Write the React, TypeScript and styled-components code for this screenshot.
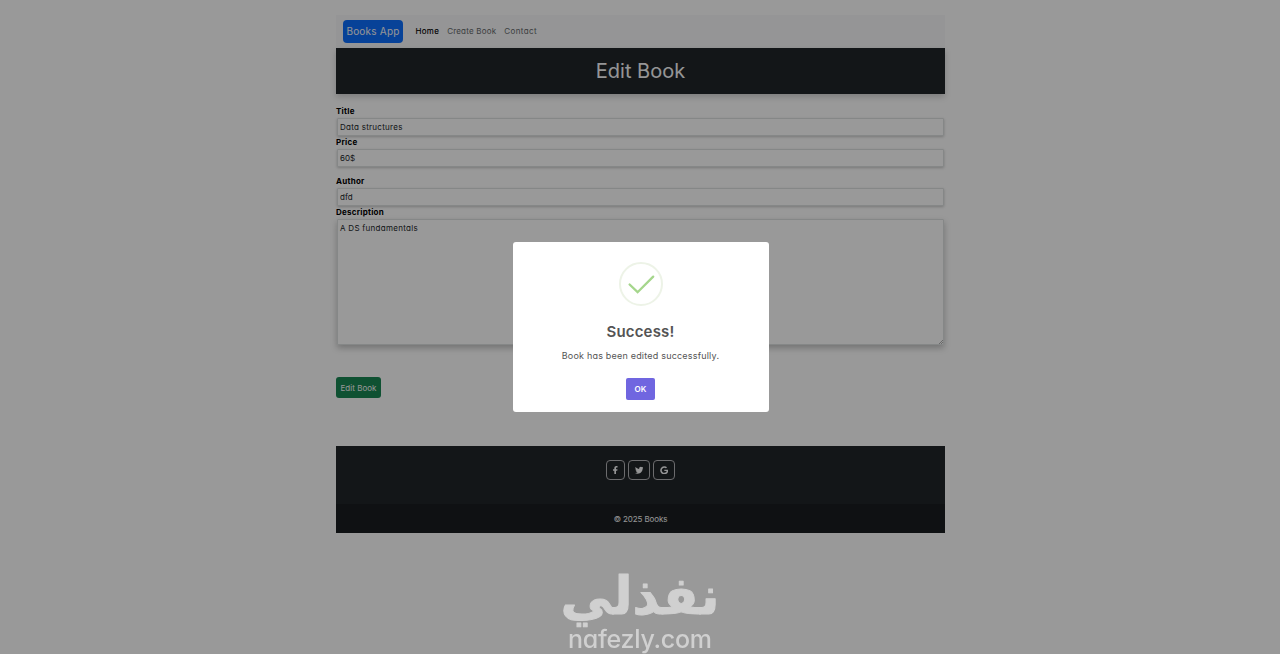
import React from 'react';
import styled, { createGlobalStyle, ThemeProvider } from 'styled-components';
import { FaFacebookF, FaGoogle, FaTwitter } from 'react-icons/fa';

const theme = {
  colors: {
    primary: '#0d6efd',
    success: '#198754',
    dark: '#212529',
    light: '#f8f9fa',
    confirm: '#7066e0',
    watermark: '#d0d0d0',
  },
};

const GlobalStyle = createGlobalStyle`
  * {
    box-sizing: border-box;
  }

  body {
    margin: 0;
    overflow: hidden;
    background: #fff;
    color: #212529;
    font-family: Inter, 'Liberation Sans', sans-serif;
    font-feature-settings: 'cv11';
    font-size: 8px;
    line-height: 12px;
  }
`;

const Text = styled.span<{ $spacing?: number }>`
  letter-spacing: ${({ $spacing = 0 }) => $spacing}px;
  white-space: nowrap;
`;

const Page = styled.div`
  width: 609px;
  margin: 0 auto;
  padding-top: 15px;
  position: relative;
  left: 0.5px;
`;

const NavigationBase = styled.nav`
  display: flex;
  align-items: center;
  height: 33px;
  padding-left: 7px;
  background: ${({ theme }) => theme.colors.light};
`;

const Brand = styled.a`
  width: 60px;
  height: 23px;
  margin-right: 12.5px;
  border-radius: 4px;
  background: ${({ theme }) => theme.colors.primary};
  color: #f8f9fa;
  font-size: 10px;
  line-height: 23px;
  text-align: center;
`;

const MenuItem = styled.a<{ $active?: boolean }>`
  margin-right: 8px;
  padding-bottom: 1px;
  color: ${({ $active }) => ($active ? '#000' : '#65686b')};
  -webkit-text-stroke: ${({ $active }) => ($active ? '0.1px' : '0')};
`;

const Header = styled.header`
  position: relative;
  height: 46px;
  background: ${({ theme }) => theme.colors.dark};
  box-shadow: 0 3px 6px rgba(0, 0, 0, 0.18);
`;

const Heading = styled.h1`
  margin: 0;
  color: #f8f9fa;
  font-size: 20px;
  font-weight: 400;
  line-height: 46px;
  text-align: center;
`;

const Form = styled.form`
  display: flex;
  flex-direction: column;
  margin-top: 11px;
`;

const Field = styled.div<{ $gap?: number }>`
  display: flex;
  flex-direction: column;
  margin-bottom: ${({ $gap = 0 }) => $gap}px;
`;

const Label = styled.label`
  height: 13px;
  color: #000;
  font-weight: 700;
  letter-spacing: 0.25px;
  line-height: 13px;
`;

const Input = styled.input<{ $spacing?: number }>`
  height: 18px;
  margin: 0 1px;
  padding: 0 2px;
  border: 1px solid #dee2e2;
  border-radius: 1px;
  outline: 0;
  background: #fff;
  box-shadow: 0 1px 3px rgba(0, 0, 0, 0.22);
  color: #212529;
  font: inherit;
  font-feature-settings: inherit;
  letter-spacing: ${({ $spacing = 0 }) => $spacing}px;
`;

const TextArea = styled.textarea`
  display: block;
  width: 100%;
  height: 126px;
  padding: 2px;
  border: 1px solid #dee2e2;
  border-radius: 1px;
  outline: 0;
  background: #fff;
  box-shadow: 0 3px 6px rgba(0, 0, 0, 0.25);
  color: #212529;
  font: inherit;
  font-feature-settings: inherit;
  letter-spacing: 0.28px;
  resize: none;
`;

const TextAreaWrapper = styled.div`
  position: relative;
  margin: 0 1px;
`;

const ResizeGrip = styled.svg`
  position: absolute;
  right: 1px;
  bottom: 1px;
`;

const SubmitButton = styled.button`
  align-self: flex-start;
  width: 45px;
  height: 21px;
  margin-top: 32px;
  padding: 0;
  border: 0;
  border-radius: 3px;
  background: ${({ theme }) => theme.colors.success};
  color: #f8f9fa;
  font: inherit;
`;

const FooterBase = styled.footer`
  height: 87px;
  margin-top: 48px;
  background: ${({ theme }) => theme.colors.dark};
  color: #f8f9fa;
  text-align: center;
`;

const SocialList = styled.div`
  display: flex;
  justify-content: center;
  gap: 3px;
  height: 58px;
  padding-top: 14px;
`;

const SocialLink = styled.a<{ $width: number }>`
  display: flex;
  align-items: center;
  justify-content: center;
  width: ${({ $width }) => $width}px;
  height: 20px;
  border: 1px solid #b4b5b8;
  border-radius: 4px;
  font-size: 8.5px;
`;

const Copyright = styled.div`
  height: 29px;
  background: rgba(0, 0, 0, 0.2);
  line-height: 30px;
`;

const Backdrop = styled.div`
  position: fixed;
  inset: 0;
  display: flex;
  align-items: center;
  justify-content: center;
  background: rgba(0, 0, 0, 0.4);
`;

const Dialog = styled.div`
  display: flex;
  flex-direction: column;
  align-items: center;
  width: 256px;
  height: 170px;
  margin-left: 1px;
  padding-top: 20px;
  border-radius: 3px;
  background: #fff;
  color: #545454;
`;

const DialogTitle = styled.h2`
  margin: 13px 0 0;
  font-size: 15px;
  font-weight: 600;
  line-height: 25px;
`;

const DialogText = styled.p`
  margin: 5px 0 0;
  font-size: 9px;
  line-height: 14px;
`;

const ConfirmButton = styled.button`
  width: 29px;
  height: 22px;
  margin-top: 15px;
  padding: 0;
  border: 0;
  border-radius: 2px;
  background: ${({ theme }) => theme.colors.confirm};
  color: #fff;
  font: inherit;
  font-weight: 600;
`;

const Watermark = styled.div`
  position: fixed;
  left: 550px;
  bottom: 0;
  width: 180px;
  height: 100px;
  color: ${({ theme }) => theme.colors.watermark};
`;

const SuccessIcon: React.FC = () => (
  <svg width="44" height="44" viewBox="0 0 44 44" fill="none">
    <circle cx="22" cy="22" r="21" stroke="#edf3e7" strokeWidth="2" />
    <path d="M10.6 22.5 18.6 30.2 34.2 14.6" stroke="#a5d68c" strokeWidth="2.3" strokeLinecap="round" />
  </svg>
);

const Navigation: React.FC = () => (
  <NavigationBase>
    <Brand>
      <Text $spacing={0.22}>Books App</Text>
    </Brand>
    <MenuItem $active>
      <Text $spacing={0.3}>Home</Text>
    </MenuItem>
    <MenuItem>
      <Text $spacing={0.2}>Create Book</Text>
    </MenuItem>
    <MenuItem>
      <Text $spacing={0.4}>Contact</Text>
    </MenuItem>
  </NavigationBase>
);

const Footer: React.FC = () => (
  <FooterBase>
    <SocialList>
      <SocialLink $width={19}>
        <FaFacebookF />
      </SocialLink>
      <SocialLink $width={22}>
        <FaTwitter />
      </SocialLink>
      <SocialLink $width={22}>
        <FaGoogle />
      </SocialLink>
    </SocialList>
    <Copyright>
      <Text $spacing={-0.1}>© 2025 Books</Text>
    </Copyright>
  </FooterBase>
);

const App: React.FC = () => (
  <ThemeProvider theme={theme}>
    <GlobalStyle />
    <Page>
      <Navigation />
      <Header>
        <Heading>
          <Text>Edit Book</Text>
        </Heading>
      </Header>
      <Form>
        <Field>
          <Label htmlFor="title">Title</Label>
          <Input id="title" defaultValue="Data structures" $spacing={0.27} />
        </Field>
        <Field $gap={8}>
          <Label htmlFor="price">Price</Label>
          <Input id="price" defaultValue="60$" />
        </Field>
        <Field>
          <Label htmlFor="author">Author</Label>
          <Input id="author" defaultValue="dfd" $spacing={0.1} />
        </Field>
        <Field>
          <Label htmlFor="description">Description</Label>
          <TextAreaWrapper>
            <TextArea id="description" defaultValue="A DS fundamentals" />
            <ResizeGrip width="4" height="4" viewBox="0 0 4 4" stroke="#777" strokeWidth="0.6">
              <path d="M0 4 4 0M2 4 4 2" />
            </ResizeGrip>
          </TextAreaWrapper>
        </Field>
        <SubmitButton type="button">
          <Text $spacing={0.03}>Edit Book</Text>
        </SubmitButton>
      </Form>
      <Footer />
    </Page>
    <Backdrop>
      <Dialog role="dialog">
        <SuccessIcon />
        <DialogTitle>
          <Text $spacing={0.15}>Success!</Text>
        </DialogTitle>
        <DialogText>
          <Text $spacing={0.2}>Book has been edited successfully.</Text>
        </DialogText>
        <ConfirmButton>OK</ConfirmButton>
      </Dialog>
    </Backdrop>
    <Watermark>
      <svg width="180" height="100" viewBox="0 0 180 100" fill="currentColor">
        <text
          x="90"
          y="60"
          textAnchor="middle"
          fontFamily="'DejaVu Sans', sans-serif"
          fontSize="52"
          fontWeight="700"
          direction="rtl"
          stroke="currentColor"
          strokeWidth="1"
          strokeLinejoin="round"
        >
          نفذلي
        </text>
        <text x="18" y="94" textLength="144" fontFamily="Inter, sans-serif" fontSize="25" fontWeight="500">
          nafezly.com
        </text>
      </svg>
    </Watermark>
  </ThemeProvider>
);

export default App;
